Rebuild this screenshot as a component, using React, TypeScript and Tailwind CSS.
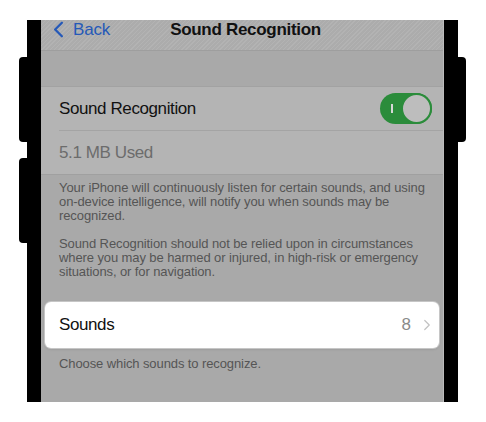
import { ChevronLeft, ChevronRight } from "lucide-react";

function SideButton({ side, className }: { side: "left" | "right"; className: string }) {
  return (
    <div
      className={`w-[8px] bg-black ${side === "left" ? "rounded-l-[4px]" : "rounded-r-[4px]"} ${className}`}
    />
  );
}

function Toggle() {
  return (
    <div className="relative w-[52px] h-[31px] rounded-full bg-[#2b8c3b]">
      <div className="absolute left-[11px] top-[11px] w-[2px] h-[9px] bg-[#d8d8d8]" />
      <div className="absolute right-0 top-0 w-[31px] h-[31px] rounded-full bg-[#bdbdbd] border-[2px] border-[#2b8c3b]" />
    </div>
  );
}

export default function App() {
  return (
    <div
      className="w-[486px] h-[422px] bg-white pt-[20px] pl-[19px] flex"
      style={{ fontFamily: '"Liberation Sans", Arial, sans-serif' }}
    >
      {/* left buttons */}
      <div className="flex flex-col">
        <SideButton side="left" className="mt-[37px] h-[85px]" />
        <SideButton side="left" className="mt-[16px] h-[85px]" />
      </div>

      {/* phone body */}
      <div className="flex h-[382px] bg-black px-[14px]">
        <div className="w-[403px] h-full bg-[#a9a9a9] flex flex-col border-r border-[#bdbdbd]">
          {/* nav bar */}
          <div className="relative h-[31px] shrink-0 flex items-start bg-[repeating-linear-gradient(135deg,#b3b3b3_0px,#b3b3b3_1px,#acacac_1px,#acacac_3px)] border-b border-[#9e9e9e]">
            <div className="flex items-center pl-[7px] h-[19px] text-[#2559b8] text-[17px] leading-[19px] tracking-[-0.2px]">
              <ChevronLeft className="w-[27px] h-[27px] -ml-[3px] mr-[1px]" strokeWidth={2.1} />
              <span>Back</span>
            </div>
            <div className="absolute inset-x-0 top-0 h-[19px] pl-[7px] flex items-center justify-center text-[17px] leading-[19px] font-bold text-[#111] tracking-[-0.3px]">
              Sound Recognition
            </div>
          </div>

          <div className="h-[35px] shrink-0" />

          {/* rows */}
          <div className="bg-[#b4b4b4] border-t border-[#a2a2a2]">
            <div className="h-[43px] flex items-center justify-between pl-[18px] pr-[11px] text-[17px] text-[#111] tracking-[-0.4px]">
              <span>Sound Recognition</span>
              <Toggle />
            </div>
            <div className="ml-[18px] border-t border-[#a4a4a4]" />
            <div className="h-[43px] flex items-center pl-[18px] text-[17px] text-[#6c6c6c] tracking-[-0.4px]">
              5.1 MB Used
            </div>
          </div>

          {/* footer */}
          <div className="border-t border-[#a0a0a0] pl-[18px] pt-[6px] text-[13px] leading-[14px] text-[#555555] tracking-[-0.1px]">
            <p>
              Your iPhone will continuously listen for certain sounds, and using
              <br />
              on-device intelligence, will notify you when sounds may be
              <br />
              recognized.
            </p>
            <p className="mt-[14px]">
              Sound Recognition should not be relied upon in circumstances
              <br />
              where you may be harmed or injured, in high-risk or emergency
              <br />
              situations, or for navigation.
            </p>
          </div>

          {/* highlighted sounds row */}
          <div className="mt-[23px] mx-[4px] h-[46px] bg-white rounded-[6px] ring-1 ring-[#c6c6c6] shadow-[0_1px_3px_rgba(0,0,0,0.15)] flex items-center justify-between pl-[14px] pr-[3px]">
            <span className="text-[17px] text-[#111] tracking-[-0.4px]">Sounds</span>
            <div className="flex items-center gap-[7px]">
              <span className="text-[17px] text-[#8a8a8a]">8</span>
              <ChevronRight className="w-[18px] h-[18px] text-[#c2c2c2]" strokeWidth={1.6} />
            </div>
          </div>

          <div className="pl-[18px] pt-[6px] text-[13px] text-[#555555] tracking-[-0.1px]">
            Choose which sounds to recognize.
          </div>
        </div>
      </div>

      {/* right button */}
      <div className="flex flex-col">
        <SideButton side="right" className="mt-[37px] h-[85px]" />
      </div>
    </div>
  );
}
